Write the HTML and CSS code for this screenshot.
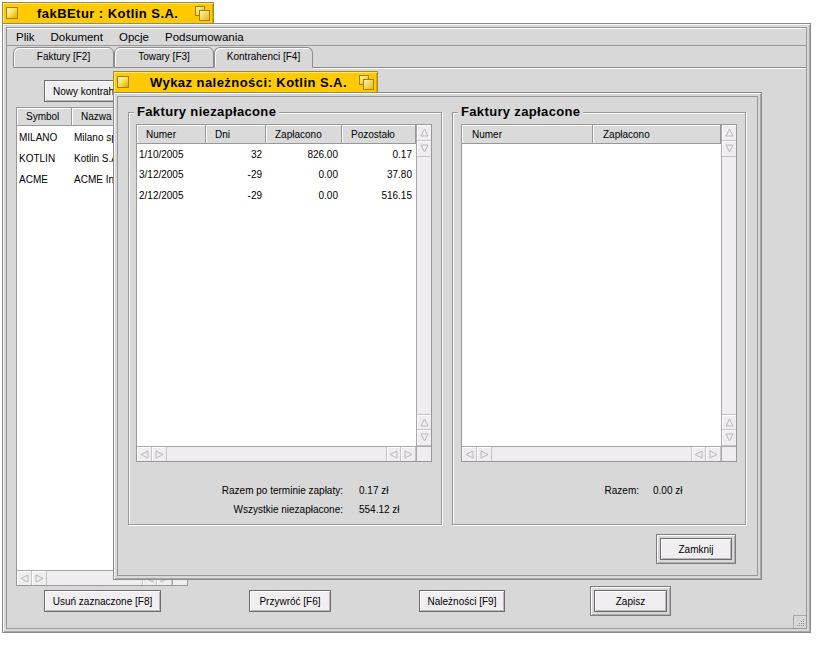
FILE: index.html
```html
<!DOCTYPE html>
<html lang="pl">
<head>
<meta charset="utf-8">
<title>fakBEtur</title>
<link rel="stylesheet" href="styles.css">
</head>
<body>
<div class="desk">

  <div class="win win-main">
    <div class="ttab ttab-main">
      <span class="closebox"></span>
      <span class="ttl ttl-main">fakBEtur : Kotlin S.A.</span>
      <svg class="zoombox" width="15" height="15" viewBox="0 0 15 15"><defs><linearGradient id="zg1" x1="0" y1="0" x2="1" y2="1"><stop offset="0" stop-color="#fff6c0"/><stop offset="1" stop-color="#e8b400"/></linearGradient></defs><rect x="0.5" y="0.5" width="9" height="9" fill="url(#zg1)" stroke="#a08000"/><rect x="4.5" y="4.5" width="10" height="10" fill="url(#zg1)" stroke="#a08000"/></svg>
    </div>
    <div class="frame frame-main">
      <div class="frame-in">
        <div class="menubar">
          <span class="mi">Plik</span><span class="mi">Dokument</span><span class="mi">Opcje</span><span class="mi">Podsumowania</span>
        </div>
        <div class="tabs">
          <div class="tab tab1">Faktury [F2]</div>
          <div class="tab tab2">Towary [F3]</div>
          <div class="tab tab3 active">Kontrahenci [F4]</div>
          <div class="tabfill"></div>
        </div>
        <div class="panel">
          <div class="toprow"><button class="btn btn-new">Nowy kontrahent</button></div>
          <div class="lv lv-main">
            <div class="lv-head"><div class="hc">Symbol</div><div class="hc">Nazwa</div></div>
            <div class="lv-vs">
              <span class="ab"><svg width="9" height="9" viewBox="0 0 9 9"><polygon points="4.5,1 8,8 1,8"/></svg></span>
              <span class="ab"><svg width="9" height="9" viewBox="0 0 9 9"><polygon points="1,1 8,1 4.5,8"/></svg></span>
              <span class="sp"></span>
              <span class="ab"><svg width="9" height="9" viewBox="0 0 9 9"><polygon points="4.5,1 8,8 1,8"/></svg></span>
              <span class="ab"><svg width="9" height="9" viewBox="0 0 9 9"><polygon points="1,1 8,1 4.5,8"/></svg></span>
            </div>
            <div class="lv-body">
              <div class="row"><span class="c">MILANO</span><span class="c c2">Milano sp. z o.o.</span></div>
              <div class="row"><span class="c">KOTLIN</span><span class="c c2">Kotlin S.A.</span></div>
              <div class="row"><span class="c">ACME</span><span class="c c2">ACME Inc.</span></div>
            </div>
            <div class="lv-hs">
              <span class="ab"><svg width="9" height="9" viewBox="0 0 9 9"><polygon points="1,4.5 8,1 8,8"/></svg></span>
              <span class="ab"><svg width="9" height="9" viewBox="0 0 9 9"><polygon points="1,1 8,4.5 1,8"/></svg></span>
              <span class="sp"></span>
              <span class="ab"><svg width="9" height="9" viewBox="0 0 9 9"><polygon points="1,4.5 8,1 8,8"/></svg></span>
              <span class="ab"><svg width="9" height="9" viewBox="0 0 9 9"><polygon points="1,1 8,4.5 1,8"/></svg></span>
            </div>
            <div class="lv-corner"></div>
          </div>
          <div class="botrow">
            <button class="btn btn-del">Usuń zaznaczone [F8]</button>
            <button class="btn btn-rest">Przywróć [F6]</button>
            <button class="btn btn-nal">Należności [F9]</button>
            <span class="defring ring-save"><button class="btn btn-save">Zapisz</button></span>
          </div>
        </div>
        <div class="grip"><svg width="12" height="12" viewBox="0 0 12 12"><g fill="#8c8c8c"><rect x="9" y="3" width="1" height="1"/><rect x="7" y="5" width="1" height="1"/><rect x="9" y="5" width="1" height="1"/><rect x="5" y="7" width="1" height="1"/><rect x="7" y="7" width="1" height="1"/><rect x="9" y="7" width="1" height="1"/><rect x="3" y="9" width="1" height="1"/><rect x="5" y="9" width="1" height="1"/><rect x="7" y="9" width="1" height="1"/><rect x="9" y="9" width="1" height="1"/></g></svg></div>
      </div>
    </div>
  </div>

  <div class="win win-dlg">
    <div class="ttab ttab-dlg">
      <span class="closebox"></span>
      <span class="ttl ttl-dlg">Wykaz należności: Kotlin S.A.</span>
      <svg class="zoombox" width="15" height="15" viewBox="0 0 15 15"><defs><linearGradient id="zg2" x1="0" y1="0" x2="1" y2="1"><stop offset="0" stop-color="#fff6c0"/><stop offset="1" stop-color="#e8b400"/></linearGradient></defs><rect x="0.5" y="0.5" width="9" height="9" fill="url(#zg2)" stroke="#a08000"/><rect x="4.5" y="4.5" width="10" height="10" fill="url(#zg2)" stroke="#a08000"/></svg>
    </div>
    <div class="frame frame-dlg">
      <div class="frame-in dlg-in">
        <div class="groups">
          <div class="group group-a">
            <span class="legend">Faktury niezapłacone</span>
            <div class="lv lv-a">
              <div class="lv-head"><div class="hc">Numer</div><div class="hc">Dni</div><div class="hc">Zapłacono</div><div class="hc">Pozostało</div></div>
              <div class="lv-vs">
                <span class="ab"><svg width="9" height="9" viewBox="0 0 9 9"><polygon points="4.5,1 8,8 1,8"/></svg></span>
                <span class="ab"><svg width="9" height="9" viewBox="0 0 9 9"><polygon points="1,1 8,1 4.5,8"/></svg></span>
                <span class="sp"></span>
                <span class="ab"><svg width="9" height="9" viewBox="0 0 9 9"><polygon points="4.5,1 8,8 1,8"/></svg></span>
                <span class="ab"><svg width="9" height="9" viewBox="0 0 9 9"><polygon points="1,1 8,1 4.5,8"/></svg></span>
              </div>
              <div class="lv-body">
                <div class="row"><span class="c">1/10/2005</span><span class="c r">32</span><span class="c r">826.00</span><span class="c r">0.17</span></div>
                <div class="row"><span class="c">3/12/2005</span><span class="c r">-29</span><span class="c r">0.00</span><span class="c r">37.80</span></div>
                <div class="row"><span class="c">2/12/2005</span><span class="c r">-29</span><span class="c r">0.00</span><span class="c r">516.15</span></div>
              </div>
              <div class="lv-hs">
                <span class="ab"><svg width="9" height="9" viewBox="0 0 9 9"><polygon points="1,4.5 8,1 8,8"/></svg></span>
                <span class="ab"><svg width="9" height="9" viewBox="0 0 9 9"><polygon points="1,1 8,4.5 1,8"/></svg></span>
                <span class="sp"></span>
                <span class="ab"><svg width="9" height="9" viewBox="0 0 9 9"><polygon points="1,4.5 8,1 8,8"/></svg></span>
                <span class="ab"><svg width="9" height="9" viewBox="0 0 9 9"><polygon points="1,1 8,4.5 1,8"/></svg></span>
              </div>
              <div class="lv-corner"></div>
            </div>
            <div class="tot tot-a">
              <span class="tl">Razem po terminie zapłaty:</span><span>0.17 zł</span>
              <span class="tl">Wszystkie niezapłacone:</span><span>554.12 zł</span>
            </div>
          </div>
          <div class="group group-b">
            <span class="legend">Faktury zapłacone</span>
            <div class="lv lv-b">
              <div class="lv-head"><div class="hc">Numer</div><div class="hc">Zapłacono</div></div>
              <div class="lv-vs">
                <span class="ab"><svg width="9" height="9" viewBox="0 0 9 9"><polygon points="4.5,1 8,8 1,8"/></svg></span>
                <span class="ab"><svg width="9" height="9" viewBox="0 0 9 9"><polygon points="1,1 8,1 4.5,8"/></svg></span>
                <span class="sp"></span>
                <span class="ab"><svg width="9" height="9" viewBox="0 0 9 9"><polygon points="4.5,1 8,8 1,8"/></svg></span>
                <span class="ab"><svg width="9" height="9" viewBox="0 0 9 9"><polygon points="1,1 8,1 4.5,8"/></svg></span>
              </div>
              <div class="lv-body"></div>
              <div class="lv-hs">
                <span class="ab"><svg width="9" height="9" viewBox="0 0 9 9"><polygon points="1,4.5 8,1 8,8"/></svg></span>
                <span class="ab"><svg width="9" height="9" viewBox="0 0 9 9"><polygon points="1,1 8,4.5 1,8"/></svg></span>
                <span class="sp"></span>
                <span class="ab"><svg width="9" height="9" viewBox="0 0 9 9"><polygon points="1,4.5 8,1 8,8"/></svg></span>
                <span class="ab"><svg width="9" height="9" viewBox="0 0 9 9"><polygon points="1,1 8,4.5 1,8"/></svg></span>
              </div>
              <div class="lv-corner"></div>
            </div>
            <div class="tot tot-b">
              <span class="tl">Razem:</span><span>0.00 zł</span>
            </div>
          </div>
        </div>
        <div class="zrow">
          <span class="defring"><button class="btn btn-close">Zamknij</button></span>
        </div>
      </div>
    </div>
  </div>

</div>
</body>
</html>
```

FILE: styles.css
```css
* { box-sizing: border-box; }

body {
  margin: 0;
  background: #ffffff;
  font-family: "Liberation Sans", Arial, sans-serif;
  font-size: 10px;
  color: #000;
}

.desk {
  position: relative;
  width: 816px;
  height: 645px;
  overflow: hidden;
}

/* ---------- windows ---------- */
.win {
  position: absolute;
  display: flex;
  flex-direction: column;
  align-items: flex-start;
}
.win-main { left: 2px; top: 2px; }
.win-dlg { left: 113px; top: 71px; }

.ttab {
  display: flex;
  align-items: center;
  height: 21px;
  padding: 0 3px;
  background: #ffcb00;
  border: 1px solid #a58a2c;
  border-bottom: none;
  box-shadow: inset 1px 1px 0 #ffe680, inset -1px 0 0 #dca800;
  font-weight: bold;
  font-size: 13px;
  letter-spacing: 0.45px;
  white-space: nowrap;
}
.ttab-main { width: 212px; }
.ttab-dlg { width: 265px; }

.closebox {
  width: 12px;
  height: 12px;
  flex: none;
  border: 1px solid #a08000;
  background: linear-gradient(135deg, #fff6c0 0%, #ffe060 45%, #e0a800 100%);
}
.ttl-main { margin-left: 19px; }
.ttl-dlg { margin-left: 21px; }
.zoombox { margin-left: auto; flex: none; }

.frame {
  border: 1px solid #8a8a8a;
  padding: 3px;
  background: #d8d8d8;
  box-shadow: inset 1px 1px 0 #f8f8f8, inset -1px -1px 0 #a8a8a8;
}
.frame-main { width: 809px; height: 610px; }
.frame-dlg { width: 649px; height: 488px; }

.frame-in {
  position: relative;
  height: 100%;
  border: 1px solid #989898;
  background: #d8d8d8;
  display: flex;
  flex-direction: column;
}

/* ---------- menu ---------- */
.menubar {
  height: 18px;
  flex: none;
  display: flex;
  align-items: center;
  padding-left: 1px;
  border-bottom: 1px solid #989898;
  box-shadow: inset 0 1px 0 #fff;
  font-size: 11.5px;
}
.mi { padding: 0 8px; }

/* ---------- tabs ---------- */
.tabs {
  height: 22px;
  flex: none;
  display: flex;
  align-items: flex-end;
  padding-left: 6px;
}
.tab {
  height: 21px;
  border: 1px solid #8c8c8c;
  border-radius: 6px 6px 0 0;
  box-shadow: inset 1px 1px 0 #fff;
  display: flex;
  align-items: center;
  justify-content: center;
  padding-bottom: 2px;
}
.tab1 { width: 101px; }
.tab2 { width: 100px; }
.tab3 { width: 99px; border-bottom-color: #d8d8d8; }
.tabfill {
  flex: 1;
  height: 21px;
  border-bottom: 1px solid #8c8c8c;
  box-shadow: 0 1px 0 #fff;
}

/* ---------- main panel ---------- */
.panel {
  flex: 1;
  display: flex;
  flex-direction: column;
  padding: 12px 0 0 9px;
}
.toprow { display: flex; padding-left: 28px; margin-bottom: 5px; }

.btn {
  height: 22px;
  padding: 0;
  font-family: "Liberation Sans", Arial, sans-serif;
  font-size: 10px;
  color: #000;
  background: #f0eef0;
  border: 1px solid #6c6c6c;
  box-shadow: inset 1px 1px 0 #fff, inset -1px -1px 0 #b8b8b8;
  text-align: center;
}
.btn-new { width: 112px; text-align: left; padding-left: 8px; }
.btn-del { width: 117px; }
.btn-rest { width: 82px; }
.btn-nal { width: 86px; }
.btn-save { width: 73px; }
.btn-close { width: 72px; }

.defring {
  display: inline-flex;
  border: 1px solid #7c7c7c;
  padding: 3px;
  background: #d8d8d8;
  box-shadow: inset 1px 1px 0 #fff, inset -1px -1px 0 #b0b0b0;
}
.ring-save { margin-left: -3px; }

.botrow {
  height: 30px;
  display: flex;
  align-items: center;
  gap: 88px;
  padding-left: 28px;
}

.grip {
  position: absolute;
  right: 0;
  bottom: 0;
  width: 13px;
  height: 13px;
  border-top: 1px solid #a8a8a8;
  border-left: 1px solid #a8a8a8;
  background: #d8d8d8;
}
.grip svg { display: block; }

/* ---------- list views ---------- */
.lv {
  display: grid;
  grid-template-columns: 1fr 15px;
  border: 1px solid #989898;
  background: #fff;
}
.lv-head {
  grid-row: 1;
  grid-column: 1;
  display: grid;
  background: #dadada;
  border-bottom: 1px solid #989898;
}
.hc {
  border-right: 1px solid #989898;
  box-shadow: inset 1px 1px 0 #fff;
  display: flex;
  align-items: center;
  padding-left: 9px;
}
.lv-vs {
  grid-row: 1 / 3;
  grid-column: 2;
  border-left: 1px solid #a8a8a8;
  background: #f0edf0;
  display: flex;
  flex-direction: column;
}
.lv-hs {
  grid-row: 3;
  grid-column: 1;
  border-top: 1px solid #a8a8a8;
  background: #f0edf0;
  display: flex;
}
.lv-corner {
  grid-row: 3;
  grid-column: 2;
  border-top: 1px solid #a8a8a8;
  border-left: 1px solid #a8a8a8;
  background: #f0edf0;
}
.sp { flex: 1; }
.ab {
  flex: none;
  display: flex;
  align-items: center;
  justify-content: center;
  background: #f0edf0;
  box-shadow: inset 1px 1px 0 #fff;
}
.lv-vs .ab { height: 16px; border-bottom: 1px solid #c4c4c4; }
.lv-vs .sp + .ab { border-top: 1px solid #c4c4c4; }
.lv-hs .ab { width: 15px; border-right: 1px solid #c4c4c4; }
.lv-hs .sp + .ab { border-left: 1px solid #c4c4c4; }
.ab svg { display: block; }
.ab polygon { fill: none; stroke: #b8b8b8; stroke-width: 1; }

.lv-body {
  grid-row: 2;
  grid-column: 1;
  background: #fff;
}
.row { display: grid; align-items: center; }
.c { padding-left: 2px; white-space: nowrap; overflow: hidden; }
.r { text-align: right; padding-right: 4px; padding-left: 0; }

/* main list */
.lv-main {
  width: 172px;
  height: 479px;
  grid-template-rows: 18px 1fr 15px;
}
.lv-main .lv-head, .lv-main .row { grid-template-columns: 55px 100px; }
.lv-main .lv-body { padding-top: 1px; }
.lv-main .row { height: 21px; }
.lv-main .c2 { padding-left: 2px; }

/* dialog lists */
.lv-a, .lv-b {
  height: 338px;
  grid-template-rows: 19px 1fr 15px;
}
.lv-a { width: 296px; }
.lv-b { width: 276px; }
.lv-a .lv-head, .lv-a .row { grid-template-columns: 69px 60px 76px 74px; }
.lv-b .lv-head { grid-template-columns: 131px 128px; }
.lv-b .hc { padding-left: 10px; }
.lv-a .row { height: 20.5px; }

/* ---------- dialog ---------- */
.dlg-in { padding: 15px 10px 0 10px; }
.groups { display: flex; gap: 10px; }
.group {
  position: relative;
  height: 413px;
  border: 1px solid #989898;
  box-shadow: inset 1px 1px 0 #fff, 1px 1px 0 #fff;
  padding: 11px 8px 0 7px;
}
.group-a { width: 314px; }
.group-b { width: 294px; padding-left: 8px; }
.legend {
  position: absolute;
  top: -9px;
  left: 5px;
  padding: 0 3px;
  background: #d8d8d8;
  font-weight: bold;
  font-size: 13px;
  line-height: 16px;
  letter-spacing: 0.35px;
}

.tot {
  display: grid;
  column-gap: 16px;
  grid-auto-rows: 19px;
  align-items: center;
  margin-top: 19px;
}
.tot-a { grid-template-columns: 207px auto; }
.tot-b { grid-template-columns: 178px auto; column-gap: 14px; }
.tl { text-align: right; }

.zrow {
  display: flex;
  justify-content: flex-end;
  margin-top: 9px;
  padding-right: 11px;
}
```
